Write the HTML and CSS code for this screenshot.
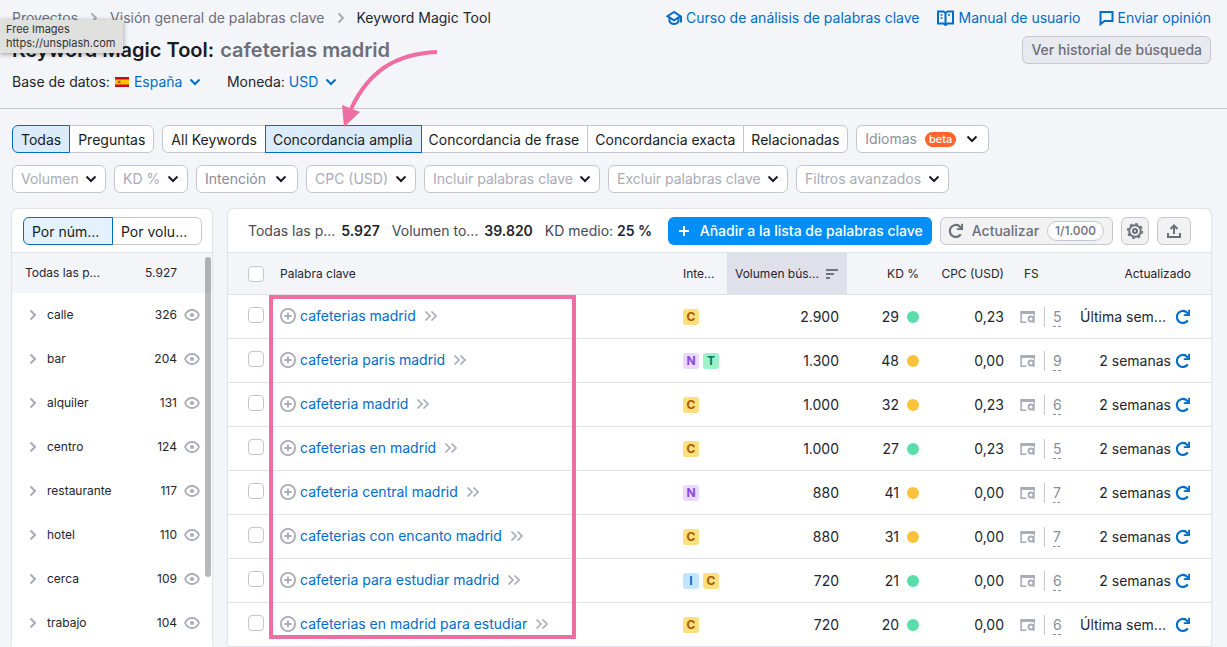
FILE: index.html
```html
<!DOCTYPE html>
<html lang="es">
<head>
<meta charset="utf-8">
<meta name="viewport" content="width=device-width, initial-scale=1">
<title>Keyword Magic Tool</title>
<link rel="stylesheet" href="styles.css">
</head>
<body>
<svg class="sprite" aria-hidden="true">
  <symbol id="chev" viewBox="0 0 8 12"><path d="M1.5 1.5 6 6l-4.500 4.500" fill="none" stroke="currentColor" stroke-width="2"/></symbol>
  <symbol id="down" viewBox="0 0 12 8"><path d="M1.500 1.500 6 6l4.500-4.500" fill="none" stroke="currentColor" stroke-width="2"/></symbol>
  <symbol id="eye" viewBox="0 0 16 12"><path d="M1 6C2.500 2.700 5 1 8 1s5.500 1.700 7 5c-1.500 3.300-4 5-7 5S2.500 9.300 1 6Z" fill="none" stroke="currentColor" stroke-width="1.800"/><circle cx="8" cy="6" r="2" fill="currentColor"/></symbol>
  <symbol id="plus" viewBox="0 0 16 16"><circle cx="8" cy="8" r="7.100" fill="none" stroke="currentColor" stroke-width="1.800"/><path d="M8 4.500v7M4.500 8h7" stroke="currentColor" stroke-width="1.800"/></symbol>
  <symbol id="dbl" viewBox="0 0 14 12"><path d="M1.500 1.500 6 6l-4.500 4.500M7.500 1.500 12 6l-4.500 4.500" fill="none" stroke="currentColor" stroke-width="1.700"/></symbol>
  <symbol id="serp" viewBox="0 0 16 14"><path d="M6.500 12.200H1.200V2M14.200 5.500V2" fill="none" stroke="currentColor" stroke-width="1.600"/><path d="M.4 1H15v3H.4z" fill="currentColor"/><circle cx="11" cy="9" r="2.500" fill="none" stroke="currentColor" stroke-width="1.800"/><path d="M13.800 6v7" stroke="currentColor" stroke-width="1.600"/></symbol>
  <symbol id="reload" viewBox="0 0 16 16"><path d="M12.800 11.300A6 6 0 1 1 11.500 3.200L13.200 5" fill="none" stroke="currentColor" stroke-width="2.200"/><path d="M15 .8V7H8.800V5.200h4.400V.8z" fill="currentColor"/></symbol>
</svg>

<header class="top">
  <div class="bar">
    <nav class="crumbs" aria-label="Ruta">
      <a href="#">Proyectos</a>
      <svg class="i-chev"><use href="#chev"/></svg>
      <a href="#">Visión general de palabras clave</a>
      <svg class="i-chev"><use href="#chev"/></svg>
      <span>Keyword Magic Tool</span>
    </nav>
    <nav class="help" aria-label="Ayuda">
      <a href="#"><svg width="16" height="16" viewBox="0 0 16 16"><path d="M8 2 1.500 6.200 8 10.300l6.500-4.100Z" fill="none" stroke="currentColor" stroke-width="2"/><path d="M3.500 7.500v4C4.500 13.200 6 14 8 14s3.500-.8 4.500-2.500v-4M15 6v6.500" fill="none" stroke="currentColor" stroke-width="2"/></svg>Curso de análisis de palabras clave</a>
      <a href="#"><svg width="17" height="16" viewBox="0 0 17 16"><path d="M1 1.500h5.500L8.500 3l2-1.500H16v12h-5.500l-2 1.500-2-1.500H1ZM8.500 3v12" fill="none" stroke="currentColor" stroke-width="2"/><path d="M3.500 5h2M3.500 8h2M11 5h2" stroke="currentColor" stroke-width="1.500"/></svg>Manual de usuario</a>
      <a href="#"><svg width="15" height="16" viewBox="0 0 15 16"><path d="M1.500 2h12v9h-8l-4 3.200Z" fill="none" stroke="currentColor" stroke-width="2"/></svg>Enviar opinión</a>
    </nav>
  </div>
  <div class="bar title-bar">
    <h1>Keyword Magic Tool: <span>cafeterias madrid</span></h1>
    <button class="btn gray" type="button">Ver historial de búsqueda</button>
  </div>
  <div class="settings">
    <label for="db">Base de datos:</label>
    <svg class="flag" width="14" height="10" viewBox="0 0 14 10"><path fill="#c60b1e" d="M0 0h14v10H0z"/><path fill="#ffc400" d="M0 2.500h14v5H0z"/><path fill="#c4502a" d="M3 3.700h2.500v2.500H3z"/></svg>
    <select id="db" class="link-select"><option>España</option></select>
    <label for="cur" class="cur">Moneda:</label>
    <select id="cur" class="link-select"><option>USD</option></select>
  </div>
  <aside class="tip">Free Images<br>https://unsplash.com</aside>
</header>

<section class="filters">
  <div class="row">
    <div class="seg" role="group"><button type="button" class="on" aria-pressed="true">Todas</button><button type="button">Preguntas</button></div>
    <div class="seg modes" role="group"><button type="button">All Keywords</button><button type="button" class="on" aria-pressed="true">Concordancia amplia</button><button type="button">Concordancia de frase</button><button type="button">Concordancia exacta</button><button type="button">Relacionadas</button></div>
    <button type="button" class="lang" aria-haspopup="true">Idiomas <span class="beta">beta</span><svg class="i-down"><use href="#down"/></svg></button>
  </div>
  <div class="row">
    <select class="drop" aria-label="Volumen"><option>Volumen</option></select>
    <select class="drop" aria-label="KD %"><option>KD %</option></select>
    <select class="drop dark" aria-label="Intención"><option>Intención</option></select>
    <select class="drop" aria-label="CPC (USD)"><option>CPC (USD)</option></select>
    <select class="drop" aria-label="Incluir palabras clave"><option>Incluir palabras clave</option></select>
    <select class="drop" aria-label="Excluir palabras clave"><option>Excluir palabras clave</option></select>
    <select class="drop" aria-label="Filtros avanzados"><option>Filtros avanzados</option></select>
  </div>
  <svg class="arrow" width="100" height="84" viewBox="0 0 100 84"><path d="M97 6C55 8 29 25 11 63" fill="none" stroke="#ef6ea2" stroke-width="4"/><path d="M2 59 20 66 4 81Z" fill="#ef6ea2"/></svg>
</section>

<main class="content">
  <aside class="panel groups">
    <div class="group-head"><div class="seg" role="group"><button type="button" class="on" aria-pressed="true">Por núm...</button><button type="button">Por volu...</button></div></div>
    <div class="all"><span>Todas las p...</span><b>5.927</b></div>
    <ul>
      <li><svg class="i-chev"><use href="#chev"/></svg><span>calle</span><b>326</b><svg class="i-eye"><use href="#eye"/></svg></li>
      <li><svg class="i-chev"><use href="#chev"/></svg><span>bar</span><b>204</b><svg class="i-eye"><use href="#eye"/></svg></li>
      <li><svg class="i-chev"><use href="#chev"/></svg><span>alquiler</span><b>131</b><svg class="i-eye"><use href="#eye"/></svg></li>
      <li><svg class="i-chev"><use href="#chev"/></svg><span>centro</span><b>124</b><svg class="i-eye"><use href="#eye"/></svg></li>
      <li><svg class="i-chev"><use href="#chev"/></svg><span>restaurante</span><b>117</b><svg class="i-eye"><use href="#eye"/></svg></li>
      <li><svg class="i-chev"><use href="#chev"/></svg><span>hotel</span><b>110</b><svg class="i-eye"><use href="#eye"/></svg></li>
      <li><svg class="i-chev"><use href="#chev"/></svg><span>cerca</span><b>109</b><svg class="i-eye"><use href="#eye"/></svg></li>
      <li><svg class="i-chev"><use href="#chev"/></svg><span>trabajo</span><b>104</b><svg class="i-eye"><use href="#eye"/></svg></li>
    </ul>
    <div class="thumb"></div>
  </aside>

  <section class="panel results">
    <div class="tools">
      <div class="stats">
        <span>Todas las p... <b>5.927</b></span>
        <span>Volumen to... <b>39.820</b></span>
        <span class="kdm">KD medio: <b>25 %</b></span>
      </div>
      <button type="button" class="btn blue"><svg width="12" height="12" viewBox="0 0 12 12"><path d="M6 1v10M1 6h10" stroke="currentColor" stroke-width="2"/></svg>Añadir a la lista de palabras clave</button>
      <button type="button" class="btn gray update"><svg width="16" height="16"><use href="#reload"/></svg>Actualizar<span class="quota">1/1.000</span></button>
      <button type="button" class="btn gray icon" aria-label="Configuración"><svg width="18" height="18" viewBox="0 0 18 18"><circle cx="9" cy="9" r="5.800" fill="none" stroke="currentColor" stroke-width="2"/><circle cx="9" cy="9" r="7.300" fill="none" stroke="currentColor" stroke-width="1.600" stroke-dasharray="2.870 2.870"/><circle cx="9" cy="9" r="2" fill="none" stroke="currentColor" stroke-width="2"/></svg></button>
      <button type="button" class="btn gray icon wide" aria-label="Exportar"><svg width="16" height="16" viewBox="0 0 16 16"><path d="M2 10v4h12v-4M8 11V3M4.500 6 8 2.500 11.500 6" fill="none" stroke="currentColor" stroke-width="2"/></svg></button>
    </div>
    <div class="table-wrap">
    <table>
      <colgroup><col class="c-check"><col><col class="c-int"><col class="c-vol"><col class="c-kd"><col class="c-cpc"><col class="c-fs"><col class="c-upd"></colgroup>
      <thead><tr>
        <th class="chk"><input type="checkbox" aria-label="Seleccionar todo"></th><th>Palabra clave</th><th>Inte...</th>
        <th class="sorted"><div class="sort">Volumen bús...<svg width="12" height="10" viewBox="0 0 12 10"><path d="M0 1h12M0 5h8M0 9h4" stroke="currentColor" stroke-width="2"/></svg></div></th>
        <th class="num">KD %</th><th class="num">CPC (USD)</th><th class="fsh">FS</th><th class="upd">Actualizado</th>
      </tr></thead>
      <tbody>
        <tr><td class="chk"><input type="checkbox" aria-label="cafeterias madrid"></td><td><div class="kw"><svg class="i-plus"><use href="#plus"/></svg><a href="#">cafeterias madrid</a><svg class="i-dbl"><use href="#dbl"/></svg></div></td><td><div class="tags"><i class="c">C</i></div></td><td class="num">2.900</td><td><div class="kd">29<i class="green"></i></div></td><td class="num">0,23</td><td><div class="fs"><svg class="i-serp"><use href="#serp"/></svg><a href="#">5</a></div></td><td><div class="when"><span class="cut">Última sem...</span><svg><use href="#reload"/></svg></div></td></tr>
        <tr><td class="chk"><input type="checkbox" aria-label="cafeteria paris madrid"></td><td><div class="kw"><svg class="i-plus"><use href="#plus"/></svg><a href="#">cafeteria paris madrid</a><svg class="i-dbl"><use href="#dbl"/></svg></div></td><td><div class="tags"><i class="n">N</i><i class="t">T</i></div></td><td class="num">1.300</td><td><div class="kd">48<i></i></div></td><td class="num">0,00</td><td><div class="fs"><svg class="i-serp"><use href="#serp"/></svg><a href="#">9</a></div></td><td><div class="when"><span>2 semanas</span><svg><use href="#reload"/></svg></div></td></tr>
        <tr><td class="chk"><input type="checkbox" aria-label="cafeteria madrid"></td><td><div class="kw"><svg class="i-plus"><use href="#plus"/></svg><a href="#">cafeteria madrid</a><svg class="i-dbl"><use href="#dbl"/></svg></div></td><td><div class="tags"><i class="c">C</i></div></td><td class="num">1.000</td><td><div class="kd">32<i></i></div></td><td class="num">0,23</td><td><div class="fs"><svg class="i-serp"><use href="#serp"/></svg><a href="#">6</a></div></td><td><div class="when"><span>2 semanas</span><svg><use href="#reload"/></svg></div></td></tr>
        <tr><td class="chk"><input type="checkbox" aria-label="cafeterias en madrid"></td><td><div class="kw"><svg class="i-plus"><use href="#plus"/></svg><a href="#">cafeterias en madrid</a><svg class="i-dbl"><use href="#dbl"/></svg></div></td><td><div class="tags"><i class="c">C</i></div></td><td class="num">1.000</td><td><div class="kd">27<i class="green"></i></div></td><td class="num">0,23</td><td><div class="fs"><svg class="i-serp"><use href="#serp"/></svg><a href="#">5</a></div></td><td><div class="when"><span>2 semanas</span><svg><use href="#reload"/></svg></div></td></tr>
        <tr><td class="chk"><input type="checkbox" aria-label="cafeteria central madrid"></td><td><div class="kw"><svg class="i-plus"><use href="#plus"/></svg><a href="#">cafeteria central madrid</a><svg class="i-dbl"><use href="#dbl"/></svg></div></td><td><div class="tags"><i class="n">N</i></div></td><td class="num">880</td><td><div class="kd">41<i></i></div></td><td class="num">0,00</td><td><div class="fs"><svg class="i-serp"><use href="#serp"/></svg><a href="#">7</a></div></td><td><div class="when"><span>2 semanas</span><svg><use href="#reload"/></svg></div></td></tr>
        <tr><td class="chk"><input type="checkbox" aria-label="cafeterias con encanto madrid"></td><td><div class="kw"><svg class="i-plus"><use href="#plus"/></svg><a href="#">cafeterias con encanto madrid</a><svg class="i-dbl"><use href="#dbl"/></svg></div></td><td><div class="tags"><i class="c">C</i></div></td><td class="num">880</td><td><div class="kd">31<i></i></div></td><td class="num">0,00</td><td><div class="fs"><svg class="i-serp"><use href="#serp"/></svg><a href="#">7</a></div></td><td><div class="when"><span>2 semanas</span><svg><use href="#reload"/></svg></div></td></tr>
        <tr><td class="chk"><input type="checkbox" aria-label="cafeteria para estudiar madrid"></td><td><div class="kw"><svg class="i-plus"><use href="#plus"/></svg><a href="#">cafeteria para estudiar madrid</a><svg class="i-dbl"><use href="#dbl"/></svg></div></td><td><div class="tags"><i class="i">I</i><i class="c">C</i></div></td><td class="num">720</td><td><div class="kd">21<i class="green"></i></div></td><td class="num">0,00</td><td><div class="fs"><svg class="i-serp"><use href="#serp"/></svg><a href="#">6</a></div></td><td><div class="when"><span>2 semanas</span><svg><use href="#reload"/></svg></div></td></tr>
        <tr><td class="chk"><input type="checkbox" aria-label="cafeterias en madrid para estudiar"></td><td><div class="kw"><svg class="i-plus"><use href="#plus"/></svg><a href="#">cafeterias en madrid para estudiar</a><svg class="i-dbl"><use href="#dbl"/></svg></div></td><td><div class="tags"><i class="c">C</i></div></td><td class="num">720</td><td><div class="kd">20<i class="green"></i></div></td><td class="num">0,00</td><td><div class="fs"><svg class="i-serp"><use href="#serp"/></svg><a href="#">6</a></div></td><td><div class="when"><span class="cut">Última sem...</span><svg><use href="#reload"/></svg></div></td></tr>
      </tbody>
    </table>
    <div class="mark"></div>
    </div>
  </section>
</main>
</body>
</html>
```
FILE: styles.css
```css
* { box-sizing: border-box; }
body {
  margin: 0;
  min-height: 100vh;
  overflow-x: hidden;
  background: #f4f5f9;
  color: #23252e;
  font: 14px/20px Inter, "Liberation Sans", sans-serif;
}
button, select, input { font: inherit; margin: 0; }
button { cursor: pointer; }
a { color: #006dca; text-decoration: none; }
svg { flex: none; display: block; }
.sprite { position: absolute; width: 0; height: 0; }
.i-chev { width: 8px; height: 12px; color: #a9abb6; }
.i-down { width: 12px; height: 8px; color: #191b23; }
.i-eye { width: 16px; height: 12px; color: #a9abb6; }
.i-plus { width: 16px; height: 16px; color: #a9abb6; }
.i-dbl { width: 14px; height: 12px; color: #a9abb6; }
.i-serp { width: 16px; height: 14px; color: #a9abb6; }

/* Header */
.top {
  position: relative;
  display: flex;
  flex-direction: column;
  gap: 8px;
  padding: 8px 16px 16px 12px;
  border-bottom: 1px solid #c4c7cf;
}
.bar { display: flex; justify-content: space-between; align-items: center; }
.crumbs, .help, .settings { display: flex; align-items: center; white-space: nowrap; }
.crumbs { gap: 12px; }
.crumbs a { color: #6c6e79; }
.help { gap: 18px; }
.help a { display: flex; align-items: center; gap: 4px; }
h1 { margin: 0; font-size: 20px; line-height: 28px; font-weight: 600; color: #191b23; white-space: nowrap; }
h1 span { margin-left: 1px; color: #6c6e79; }
.flag { margin: 0 5px; }
.cur { margin: 0 4px 0 26px; }
.link-select {
  appearance: none;
  border: 0;
  padding: 0 18px 0 0;
  color: #006dca;
  background: url("data:image/svg+xml,%3Csvg xmlns='http://www.w3.org/2000/svg' width='12' height='8'%3E%3Cpath d='M1.500 1.500 6 6l4.500-4.500' fill='none' stroke='%23006dca' stroke-width='2'/%3E%3C/svg%3E") no-repeat right center;
}
.tip {
  position: absolute;
  top: 20px;
  left: 0;
  padding: 2px 8px 3px 6px;
  background: #e0e0de;
  box-shadow: 0 1px 5px rgba(0, 0, 0, .4);
  color: #333;
  font-size: 11px;
  line-height: 14px;
}

/* Buttons */
.btn {
  display: flex;
  align-items: center;
  justify-content: center;
  height: 28px;
  padding: 0 8px;
  border: 1px solid transparent;
  border-radius: 6px;
  font-weight: 500;
  white-space: nowrap;
}
.gray { background: #e9eaf0; border-color: #c4c7cf; color: #6c6e79; }
.tools .gray { background: #f2f2f3; }
.blue { gap: 10px; padding: 0 8px 0 9px; background: #008ff8; color: #fff; }
.update { gap: 8px; padding: 0 8px 0 7px; }
.quota { padding: 0 7px; border: 1px solid #c4c7cf; border-radius: 10px; background: #fff; font-size: 12px; line-height: 18px; }
.icon { width: 28px; padding: 0; }
.wide { width: 34px; }

/* Filters */
.filters { position: relative; display: flex; flex-direction: column; gap: 12px; padding: 16px 12px; }
.row { display: flex; gap: 8px; }
.seg { display: flex; }
.seg button {
  height: 28px;
  padding: 2px 8px 0;
  border: 1px solid #c4c7cf;
  background: #fff;
  color: #191b23;
  white-space: nowrap;
}
.seg button + button { margin-left: -1px; }
.modes button + button { padding-left: 7px; }
.seg button:first-child { border-radius: 6px 0 0 6px; }
.seg button:last-child { border-radius: 0 6px 6px 0; }
.seg .on { position: relative; background: #dbebf9; border-color: #006dca; }
.lang, .drop { height: 28px; border: 1px solid #c4c7cf; border-radius: 6px; background-color: #fff; }
.lang { display: flex; align-items: center; padding: 0 10px 0 8px; color: #8a8e9b; }
.beta { margin: 0 10px 0 8px; padding: 0 4px; border-radius: 8px; background: #ff642d; color: #fff; font-size: 11px; line-height: 15px; font-weight: 500; }
.drop {
  appearance: none;
  padding: 0 26px 0 8px;
  color: #a9abb6;
  background-image: url("data:image/svg+xml,%3Csvg xmlns='http://www.w3.org/2000/svg' width='12' height='8'%3E%3Cpath d='M1.500 1.500 6 6l4.500-4.500' fill='none' stroke='%23191b23' stroke-width='2'/%3E%3C/svg%3E");
  background-repeat: no-repeat;
  background-position: right 8px center;
}
.dark { padding-right: 31px; background-position: right 10px center; color: #8a8e9b; }
.arrow { position: absolute; left: 340px; top: -63px; z-index: 2; pointer-events: none; }

/* Panels */
.content { display: flex; gap: 16px; align-items: stretch; padding: 0 16px 0 12px; }
.panel { position: relative; background: #fff; border-radius: 6px 6px 0 0; box-shadow: 0 0 2px rgba(25, 27, 35, .25); }
.groups { flex: none; width: 200px; font-size: 12px; }
.group-head { padding: 8px 10px 7px 11px; border-bottom: 1px solid #e0e1e9; font-size: 14px; }
.group-head button { flex: 1; text-align: left; }
.group-head .on { background: #e4f2fe; }
.groups b { font-weight: 400; margin-left: auto; }
.all { display: flex; align-items: center; height: 40px; padding: 0 35px 0 13px; background: #f4f5f9; }
.groups ul { list-style: none; margin: 0; padding: 0; }
.groups li { display: flex; align-items: center; height: 44px; padding: 0 12px 0 17px; }
.groups li span { margin-left: 10px; }
.groups li b { margin-right: 7px; }
.thumb { position: absolute; top: 48px; right: 1px; width: 6px; height: 320px; border-radius: 3px; background: rgba(0, 0, 0, .28); }

.results { flex: 1; min-width: 0; }
.tools { display: flex; align-items: center; gap: 8px; padding: 8px 20px 7px; border-bottom: 1px solid #e0e1e9; }
.stats { display: flex; flex: 1; gap: 12px; white-space: nowrap; color: #484a54; }
.stats b { margin-left: 2px; font-weight: 600; color: #23252e; }
.stats .kdm b { margin-left: 0; }

/* Table */
.table-wrap { position: relative; }
table { width: 100%; table-layout: fixed; border-collapse: separate; border-spacing: 0; }
.c-check { width: 44px; }
.c-int { width: 52px; }
.c-vol { width: 120px; }
.c-kd { width: 80px; }
.c-cpc { width: 85px; }
.c-fs { width: 60px; }
.c-upd { width: 139px; }
th, td { height: 44px; padding: 0 8px; border-bottom: 1px solid #e0e1e9; text-align: left; white-space: nowrap; }
th { height: 42px; background: #f4f5f9; font-size: 12px; font-weight: 400; }
.chk { padding: 0 0 3px 20px; }
th.chk { padding-bottom: 0; }
.sorted { background: #e0e0ea; }
.sort { display: flex; align-items: center; gap: 7px; }
.sort svg { color: #6c7684; }
.num, .upd { text-align: right; }
.upd { padding-right: 20px; }
.fsh { padding-left: 12px; }
input[type="checkbox"] { appearance: none; display: block; width: 16px; height: 16px; border: 1px solid #c4c7cf; border-radius: 4px; background: #fff; }
.kw { display: flex; align-items: center; gap: 4px; padding-bottom: 2px; }
.kw a { margin-right: 4px; }
.tags { display: flex; gap: 4px; }
.tags i { width: 16px; height: 16px; border-radius: 3px; font-size: 12px; line-height: 16px; font-style: normal; font-weight: 700; text-align: center; }
.c { background: #fcdf7e; color: #a75800; }
.n { background: #ead8fd; color: #8649e1; }
.t { background: #9ef2c9; color: #007c65; }
.i { background: #c4e5fe; color: #006dca; }
.kd { display: flex; align-items: center; justify-content: flex-end; gap: 8px; }
.kd i { width: 12px; height: 12px; border-radius: 50%; background: #fdc23c; }
.kd .green { background: #59ddaa; }
.fs { display: flex; align-items: center; }
.fs a { margin-left: 8px; padding-left: 8px; border-left: 1px solid #c4c7cf; color: #8a8e9b; text-decoration: underline dashed 1px; text-underline-offset: 4px; }
.when { display: flex; align-items: center; justify-content: flex-end; gap: 4px; padding-right: 12px; }
.when span { width: 92px; text-align: right; }
.when .cut { text-align: left; }
.when svg { width: 16px; height: 16px; color: #006dca; }
.mark { position: absolute; left: 41px; top: 42px; width: 307px; height: 344px; border: 4px solid #ef6ea2; pointer-events: none; }
```
